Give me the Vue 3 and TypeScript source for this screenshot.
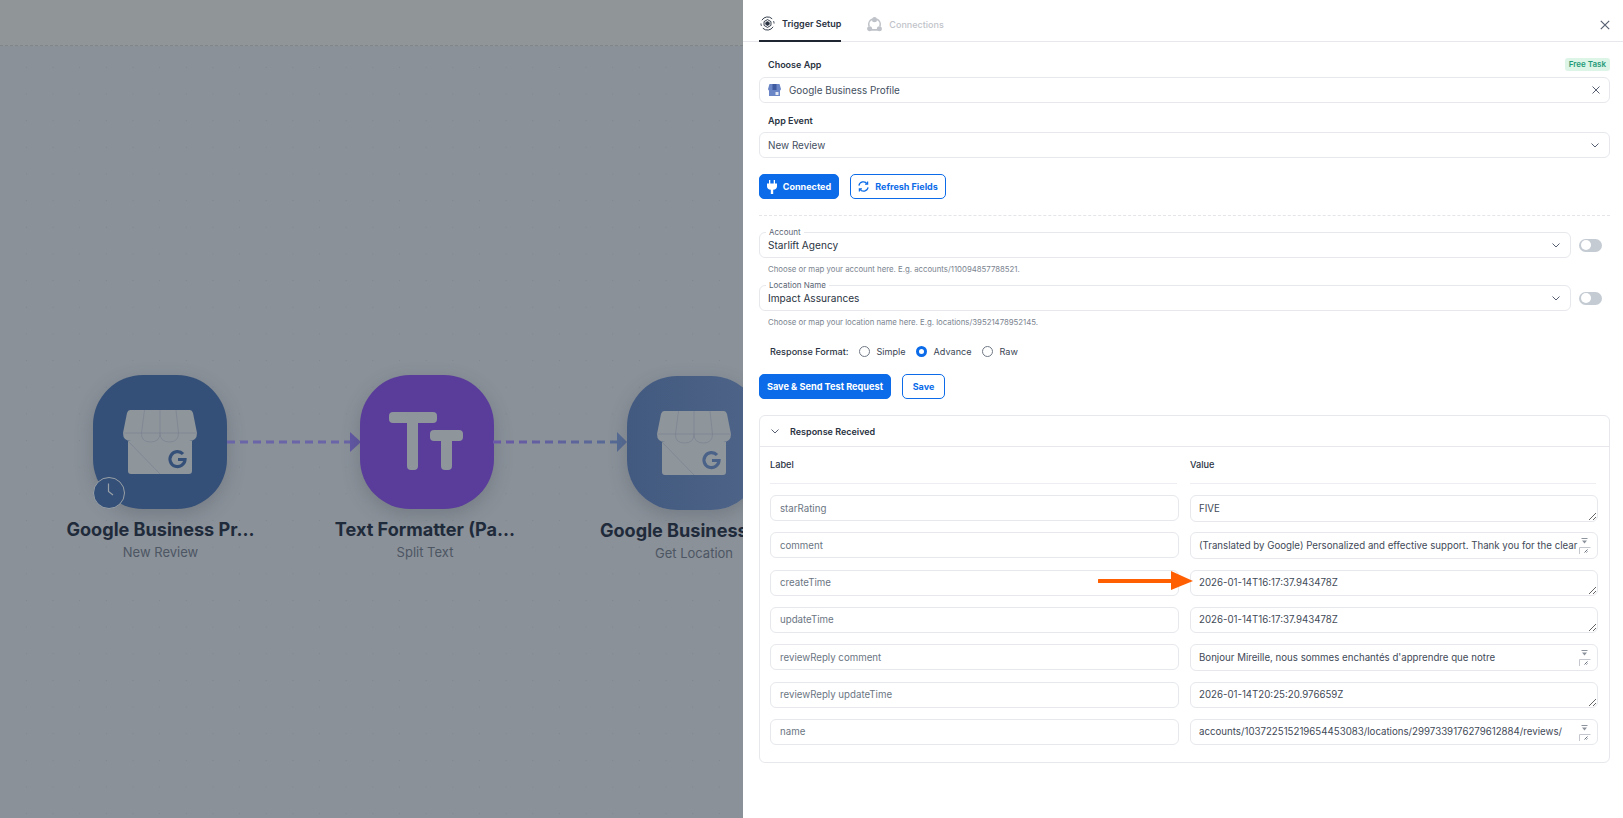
<script setup lang="ts">
interface Row { label: string; value: string; scroll: boolean }
const rows: Row[] = [
  { label: 'starRating', value: 'FIVE', scroll: false },
  { label: 'comment', value: '(Translated by Google) Personalized and effective support. Thank you for the clear and helpful advice you gave me throughout.', scroll: true },
  { label: 'createTime', value: '2026-01-14T16:17:37.943478Z', scroll: false },
  { label: 'updateTime', value: '2026-01-14T16:17:37.943478Z', scroll: false },
  { label: 'reviewReply comment', value: "Bonjour Mireille, nous sommes enchantés d'apprendre que notre\naccompagnement vous a donné entière satisfaction. Merci pour votre confiance.", scroll: true },
  { label: 'reviewReply updateTime', value: '2026-01-14T20:25:20.976659Z', scroll: false },
  { label: 'name', value: 'accounts/103722515219654453083/locations/2997339176279612884/reviews/\nAbFvOqnR7kLm2', scroll: true },
]
</script>

<template>
  <div class="root">
    <section class="canvas">
      <div class="topbar"></div>
      <div class="board"></div>

      <div class="node blue" style="left:93px;top:375px">
        <svg class="store" viewBox="0 0 74 64"><use href="#store-shape" /></svg>
      </div>
      <div class="clock">
        <svg viewBox="0 0 29 29" width="29" height="29"><path d="M14.500 5.500V13.500L19 17" fill="none" stroke="#98a0a8" stroke-width="1.200" /></svg>
      </div>
      <div class="caption" style="left:60.500px;top:518px">
        <div class="title">Google Business Pr...</div>
        <div class="sub">New Review</div>
      </div>

      <svg class="edge" style="left:227px;top:432px" width="134" height="20" viewBox="0 0 134 20">
        <path d="M0 10H124" stroke="#6a64a8" stroke-width="3" stroke-dasharray="8 5" />
        <path d="M123 0L134 10L123 20Z" fill="#6157a3" />
      </svg>

      <div class="node purple" style="left:360px;top:375px">
        <svg class="tt" viewBox="0 0 134 134">
          <rect x="29" y="37" width="48" height="11" rx="4" />
          <rect x="47" y="37" width="11" height="58" rx="4" />
          <rect x="70" y="55" width="33" height="11" rx="4" />
          <rect x="81" y="55" width="11" height="40" rx="4" />
        </svg>
      </div>
      <div class="caption" style="left:325px;top:518px">
        <div class="title">Text Formatter (Pa...</div>
        <div class="sub">Split Text</div>
      </div>

      <svg class="edge" style="left:493px;top:432px" width="134" height="20" viewBox="0 0 134 20">
        <defs>
          <linearGradient id="edge2" gradientUnits="userSpaceOnUse" x1="0" x2="124" y1="10" y2="10">
            <stop offset="0" stop-color="#6a58a8" />
            <stop offset="1" stop-color="#566b94" />
          </linearGradient>
        </defs>
        <path d="M0 10H124" stroke="url(#edge2)" stroke-width="3" stroke-dasharray="8 5" />
        <path d="M124 0L134 10L124 20Z" fill="#566b94" />
      </svg>

      <div class="node blue2" style="left:627px;top:376px">
        <svg class="store" viewBox="0 0 74 64"><use href="#store-shape" /></svg>
      </div>
      <div class="caption" style="left:594px;top:519px">
        <div class="title">Google Business Pr...</div>
        <div class="sub">Get Location</div>
      </div>

      <svg width="0" height="0" style="position:absolute">
        <defs>
          <g id="store-shape">
            <path d="M7 0H67Q69 0 70 3L74 23Q74 31 66 31H69V61Q69 64 66 64H8Q5 64 5 61V31H8Q0 31 0 23L4 3Q5 0 7 0Z" fill="#8e959b" />
            <path d="M0.500 23H73.500M21.500 0L18.500 23M37 0V23M53 0L55.500 23M18.500 23Q18 32 27.500 32Q37 32 37 23Q37 32 46.500 32Q55.500 32 55.500 23M5 31L37 64" stroke="#7b8391" stroke-width="0.700" fill="none" />
            <path d="M60 44A7.500 7.500 0 1 0 62 49.500H55" fill="none" stroke="currentColor" stroke-width="3.200" />
          </g>
        </defs>
      </svg>
    </section>

    <aside class="panel">
      <header class="tabs">
        <div class="tab active">
          <svg class="tabicon" viewBox="0 0 16 16" width="15" height="15" fill="none" stroke="#2a3342" stroke-width="1">
            <path d="M2 4.500A7 7 0 0 1 13 3M14 11.500A7 7 0 0 1 3 13M1 8a7 7 0 0 0 .5 2.500M15 8a7 7 0 0 0-.5-2.500" />
            <path d="M8 3.800L11.700 6V10L8 12.200L4.300 10V6Z" />
            <path d="M8 6L9.800 7V9L8 10L6.200 9V7Z" fill="#2a3342" />
          </svg>
          Trigger Setup
        </div>
        <div class="tab muted">
          <svg class="tabicon" viewBox="0 0 16 16" width="15" height="15" fill="none" stroke="#bfc3c9" stroke-width="1.800">
            <path d="M5.500 2.500A6 6 0 0 0 2.200 10M10.500 2.500A6 6 0 0 1 13.800 10M4.500 13.800H11.500" />
            <circle cx="8" cy="2.800" r="1.800" fill="#bfc3c9" />
            <circle cx="2.800" cy="12.500" r="1.800" fill="#bfc3c9" />
            <circle cx="13.200" cy="12.500" r="1.800" fill="#bfc3c9" />
          </svg>
          Connections
        </div>
        <svg class="close" viewBox="0 0 10 10" width="10" height="10"><path d="M.8.8L9.200 9.200M9.200.8L.8 9.200" stroke="#566072" stroke-width="1.200" /></svg>
      </header>

      <div class="content">
        <div class="labelrow">
          <span class="flabel">Choose App</span>
          <span class="badge">Free Task</span>
        </div>
        <div class="field">
          <svg class="appicon" viewBox="0 0 13 12" width="13" height="12">
            <path d="M1.500 0H11.500L13 5Q13 6.500 11 6.500H2Q0 6.500 0 5Z" fill="#6a86c6" />
            <path d="M4.500 0H8.500V6H4.500Z" fill="#3f5a9e" />
            <rect x="1" y="6" width="11" height="6" fill="#6a86c6" />
            <rect x="7.500" y="8" width="3" height="3" fill="#e2e7f3" />
          </svg>
          <span class="grow">Google Business Profile</span>
          <svg viewBox="0 0 8 8" width="8" height="8"><path d="M.5.5L7.500 7.500M7.500.5L.5 7.500" stroke="#566072" stroke-width="1" /></svg>
        </div>

        <div class="labelrow second"><span class="flabel">App Event</span></div>
        <div class="field">
          <span class="grow">New Review</span>
          <svg class="chev" viewBox="0 0 8 5" width="8" height="5"><path d="M.5.500L4 4L7.500.5" fill="none" stroke="#566072" /></svg>
        </div>

        <div class="btnrow first">
          <button class="btn solid connected">
            <svg viewBox="0 0 10 14" width="10" height="14" fill="#fff"><path d="M2 0h1.300v3.500H2zM6.700 0H8v3.500H6.700zM0 3.500h10v2.700C10 8.300 8.500 9.500 6.200 9.700V14H3.800V9.700C1.500 9.500 0 8.300 0 6.200z" /></svg>
            Connected
          </button>
          <button class="btn outline refresh">
            <svg viewBox="0 0 12 12" width="11" height="11" fill="none" stroke="#0b6be8" stroke-width="1.300"><path d="M1 5A5 5 0 0 1 10 3M11 7A5 5 0 0 1 2 9" /><path d="M10.500 .6V3.400H7.700M1.500 11.400V8.600H4.300" /></svg>
            Refresh Fields
          </button>
        </div>

        <div class="dash"></div>

        <div class="maprow">
          <div class="field legend">
            <span class="legendtext">Account</span>
            <span class="grow dark">Starlift Agency</span>
            <svg class="chev" viewBox="0 0 8 5" width="8" height="5"><path d="M.5.500L4 4L7.500.5" fill="none" stroke="#566072" /></svg>
          </div>
          <span class="toggle"><i></i></span>
        </div>
        <p class="help">Choose or map your account here. E.g. accounts/110094857788521.</p>

        <div class="maprow">
          <div class="field legend">
            <span class="legendtext">Location Name</span>
            <span class="grow dark">Impact Assurances</span>
            <svg class="chev" viewBox="0 0 8 5" width="8" height="5"><path d="M.5.500L4 4L7.500.5" fill="none" stroke="#566072" /></svg>
          </div>
          <span class="toggle"><i></i></span>
        </div>
        <p class="help">Choose or map your location name here. E.g. locations/39521478952145.</p>

        <div class="radios">
          <span class="rtitle">Response Format:</span>
          <span class="radio"></span><span class="rlabel">Simple</span>
          <span class="radio on"></span><span class="rlabel">Advance</span>
          <span class="radio"></span><span class="rlabel">Raw</span>
        </div>

        <div class="btnrow">
          <button class="btn solid send">Save &amp; Send Test Request</button>
          <button class="btn outline save">Save</button>
        </div>

        <section class="accordion">
          <div class="achead">
            <svg viewBox="0 0 8 5" width="8" height="5"><path d="M.5.500L4 4L7.500.5" fill="none" stroke="#566072" /></svg>
            <span>Response Received</span>
          </div>
          <div class="acbody">
            <div class="grid heads">
              <div class="head">Label</div>
              <div class="head">Value</div>
            </div>
            <div v-for="r in rows" :key="r.label" class="grid row">
              <input class="lab" :value="r.label" readonly />
              <div class="valwrap">
                <textarea class="val" :class="{ scroll: r.scroll }" :value="r.value" rows="1" readonly></textarea>
                <svg v-if="r.scroll" class="scrollmark" viewBox="0 0 13 17" width="13" height="17">
                  <path d="M2.500 0.500H8.500" stroke="#8c939c" stroke-width="1" fill="none" />
                  <path d="M3 2.500H8L5.500 5.500Z" fill="#8c939c" />
                  <path d="M0.500 16V9.500H11.500" stroke="#c4c8ce" stroke-width="1" fill="none" />
                  <path d="M5.500 14.500L8.500 11.500M7.500 14.500L8.500 13.500" stroke="#6b7280" stroke-width="1" fill="none" />
                </svg>
              </div>
            </div>
          </div>
        </section>
      </div>

      <svg class="orange" width="96" height="20" viewBox="0 0 96 20">
        <path d="M1 10H75" stroke="#ff5f00" stroke-width="4" stroke-linecap="round" />
        <path d="M73 0L95 10L73 19Z" fill="#ff5f00" />
      </svg>
    </aside>
  </div>
</template>

<style>
html, body { margin: 0; padding: 0; overflow: hidden; background: #fff; }
</style>

<style scoped>
* { box-sizing: border-box; }
.root { width: 1623px; height: 818px; display: flex; overflow: hidden; font-family: Inter, "Liberation Sans", sans-serif; color: #2a3342; }

.canvas { position: relative; flex: 0 0 743px; overflow: hidden; background: #8a9199; display: flex; flex-direction: column; }
.topbar { height: 46px; background: #909598; border-bottom: 1px dashed #7f8588; flex: none; }
.board { flex: 1; background-image: radial-gradient(circle at center, #7f868e 0.5px, transparent 1px); background-size: 26.67px 26.67px; background-position: 13px 8px; }
.node { position: absolute; width: 134px; height: 134px; border-radius: 50px; box-shadow: 0 6px 18px rgba(60, 68, 78, .28); display: flex; align-items: center; justify-content: center; }
.blue { background: #355078; color: #355078; }
.blue2 { background: linear-gradient(90deg, #435a80, #4e6488); color: #4a6188; }
.purple { background: #5a3d9a; }
.store { width: 74px; height: 64px; margin-top: -1px; }
.tt { width: 134px; height: 134px; fill: #8e959b; }
.clock { position: absolute; left: 93px; top: 477px; width: 32px; height: 32px; border-radius: 50%; background: #355078; border: 1.500px solid #98a0a6; }
.clock svg { display: block; }
.caption { position: absolute; width: 200px; text-align: center; }
.title { font-size: 18.100px; font-weight: 700; line-height: 22px; color: #1f2a3a; white-space: nowrap; }
.sub { font-size: 13px; line-height: 18px; margin-top: 3px; color: #4d5663; }
.edge { position: absolute; }

.panel { position: relative; flex: 1; background: #fff; display: flex; flex-direction: column; min-width: 0; }
.tabs { height: 42px; flex: none; display: flex; gap: 26px; padding: 0 13px 0 16px; border-bottom: 1.500px solid #e6e8ec; align-items: stretch; }
.tab { display: flex; align-items: center; gap: 7px; font-size: 9px; font-weight: 600; height: 41.500px; padding-top: 7px; }
.tab.active { color: #2a3342; border-bottom: 2px solid #1f2632; padding-left: 1px; }
.tab.muted { color: #bfc3c9; font-weight: 500; }
.close { align-self: center; margin-left: auto; margin-top: 8px; }
.content { padding: 0 13px 0 16px; }

.labelrow { height: 35px; display: flex; align-items: flex-end; justify-content: space-between; padding: 0 0 6px 9px; }
.labelrow.second { height: 29px; padding-bottom: 5px; }
.flabel { font-size: 9px; font-weight: 600; color: #2a3342; line-height: 13px; }
.badge { font-size: 8px; font-weight: 600; color: #1f9a78; background: #dcf5e7; border-radius: 3px; padding: 0 4px; line-height: 13px; height: 13px; }
.field { height: 26px; border: 1px solid #e6e8ec; border-radius: 6px; display: flex; align-items: center; padding: 0 9px 0 8px; font-size: 9.900px; color: #44505f; gap: 8px; background: #fff; }
.grow { flex: 1; white-space: nowrap; }
.dark { color: #2a3342; }
.appicon { flex: none; }
.chev { flex: none; margin-right: 1px; }

.btnrow { display: flex; gap: 11px; }
.btnrow.first { margin-top: 16px; }
.btn { height: 25px; border-radius: 5px; font-family: inherit; font-size: 9px; font-weight: 700; display: flex; align-items: center; justify-content: center; gap: 6px; padding: 0; cursor: pointer; }
.solid { background: #0b6be8; color: #fff; border: 1px solid #0b6be8; }
.outline { background: #fff; color: #0b6be8; border: 1px solid #0b6be8; }
.connected { width: 80px; }
.refresh { width: 96px; }
.send { width: 132px; font-size: 9.200px; }
.save { width: 43px; }

.dash { border-top: 1px dashed #e3e5e9; margin-top: 16px; margin-bottom: 16px; }
.maprow { display: flex; align-items: center; gap: 8px; }
.legend { flex: 1; position: relative; align-items: center; font-size: 10.100px; }
.legendtext { position: absolute; left: 6px; top: -6px; background: #fff; padding: 0 3px; font-size: 8px; line-height: 10px; color: #5a6573; }
.toggle { width: 23px; height: 13px; border-radius: 7px; background: #c5cbd3; display: flex; align-items: center; padding: 0 1.500px; flex: none; margin-right: 8px; }
.toggle i { width: 10px; height: 10px; border-radius: 50%; background: #fff; }
.help { margin: 0; height: 27px; padding: 6px 0 0 9px; font-size: 7.800px; line-height: 10px; color: #7b8490; }

.radios { height: 26px; display: flex; align-items: center; padding-left: 11px; font-size: 9.100px; margin-bottom: 10px; color: #3a4554; }
.rtitle { font-weight: 500; color: #2a3342; margin-right: 10px; }
.radio { width: 11px; height: 11px; border-radius: 50%; border: 1px solid #6f7885; margin-right: 7px; flex: none; }
.radio.on { border: 3px solid #0b6be8; }
.rlabel { margin-right: 10px; }

.accordion { margin-top: 16px; border: 1px solid #e6e8ec; border-radius: 6px; height: 348px; }
.achead { height: 31px; border-bottom: 1px solid #e6e8ec; display: flex; align-items: center; gap: 11px; padding-left: 11px; font-size: 9px; font-weight: 600; color: #2a3342; }
.acbody { padding: 0 10px; }
.grid { display: grid; grid-template-columns: 409px 408px; column-gap: 11px; }
.heads { height: 37px; margin-bottom: 11px; }
.head { font-size: 9.200px; font-weight: 500; color: #2a3342; border-bottom: 1px solid #eceef1; padding: 12px 0 0; margin: 0 2px 0 0; }
.row { margin-bottom: 11.330px; height: 26px; }
.lab { height: 26px; border: 1px solid #e6e8ec; border-radius: 6px; padding: 0 9px; font: 400 9.700px Inter, sans-serif; color: #6b7683; outline: none; background: #fff; width: 100%; }
.valwrap { position: relative; height: 26.500px; }
.val { border: 1px solid #e6e8ec; border-radius: 6px; padding: 2.500px 8px 0; height: 26.500px; overflow: hidden; font: 400 9.700px/20px Inter, sans-serif; color: #3f4a58; outline: none; resize: vertical; width: 100%; background: #fff; display: block; }
.val.scroll { padding-right: 18px; resize: none; }
.scrollmark { position: absolute; right: 6px; top: 6px; }
.orange { position: absolute; left: 355px; top: 571px; }
</style>
